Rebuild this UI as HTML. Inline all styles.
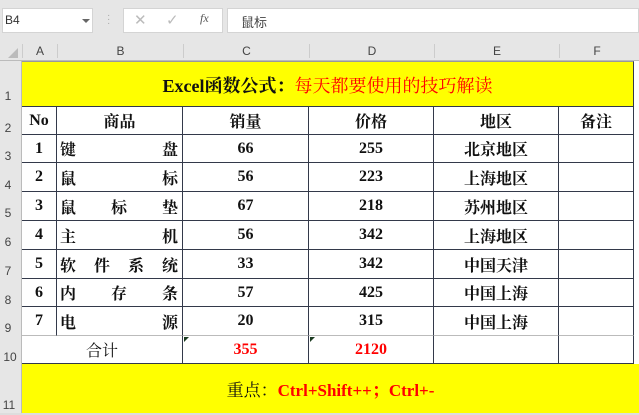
<!DOCTYPE html>
<html><head><meta charset="utf-8"><style>
*{margin:0;padding:0;box-sizing:border-box}
body{width:639px;height:415px;overflow:hidden;background:#e6e6e6;font-family:"Liberation Serif","Noto Serif CJK SC",serif;position:relative}
.a{position:absolute}
.hd{position:absolute;font-family:"Liberation Sans","Noto Sans CJK SC",sans-serif;font-size:12px;color:#444;text-align:center}
.c{position:absolute;border-right:1px solid #33394a;border-bottom:1px solid #33394a;display:flex;align-items:center;justify-content:center;font-size:16px;font-weight:bold;color:#111;background:#fff}
.y{background:#ff0}
.r{color:#f00}
.sp{justify-content:space-between;padding:0 4px 0 3px}
</style></head><body>
<div class="a" style="left:2px;top:8px;width:91px;height:25px;background:#fff;border:1px solid #d4d4d4"></div>
<div class="a" style="left:5px;top:13px;font-family:'Liberation Sans',sans-serif;font-size:12px;color:#333">B4</div>
<div class="a" style="left:82px;top:19px;width:0;height:0;border-left:4px solid transparent;border-right:4px solid transparent;border-top:4px solid #666"></div>
<div class="a" style="left:107px;top:14px;color:#aaa;font-size:10px;font-family:'Liberation Sans',sans-serif;line-height:4px">·<br>·<br>·</div>
<div class="a" style="left:123px;top:8px;width:100px;height:25px;background:#fff;border:1px solid #d4d4d4"></div>
<div class="a" style="left:134px;top:11px;color:#bbb;font-size:15px;font-family:'Liberation Sans',sans-serif">✕</div>
<div class="a" style="left:166px;top:11px;color:#bbb;font-size:15px;font-family:'DejaVu Sans',sans-serif">✓</div>
<div class="a" style="left:200px;top:11px;color:#555;font-size:12px;font-style:italic">fx</div>
<div class="a" style="left:227px;top:8px;width:412px;height:25px;background:#fff;border:1px solid #d4d4d4"></div>
<div class="a" style="left:241px;top:12px;font-family:'Noto Sans CJK SC',sans-serif;font-size:13px;color:#444">鼠标</div>
<div class="a" style="left:0;top:43px;width:639px;height:18px;background:#e6e6e6;border-bottom:1px solid #bbb"></div>
<div class="a" style="left:8px;top:48px;width:0;height:0;border-left:10px solid transparent;border-bottom:10px solid #bbb"></div>
<div class="hd" style="left:22px;top:44px;width:35px;border-left:1px solid #ccc">A</div>
<div class="hd" style="left:57px;top:44px;width:126px;border-left:1px solid #ccc">B</div>
<div class="hd" style="left:183px;top:44px;width:126px;border-left:1px solid #ccc">C</div>
<div class="hd" style="left:309px;top:44px;width:125px;border-left:1px solid #ccc">D</div>
<div class="hd" style="left:434px;top:44px;width:125px;border-left:1px solid #ccc">E</div>
<div class="hd" style="left:559px;top:44px;width:75px;border-left:1px solid #ccc">F</div>
<div class="a" style="left:0;top:61px;width:22px;height:354px;background:#e6e6e6;border-right:1px solid #bbb"></div>
<div class="hd" style="left:0;top:89px;width:16px">1</div>
<div class="hd" style="left:0;top:121px;width:16px">2</div>
<div class="hd" style="left:0;top:149px;width:16px">3</div>
<div class="hd" style="left:0;top:178px;width:16px">4</div>
<div class="hd" style="left:0;top:206px;width:16px">5</div>
<div class="hd" style="left:0;top:235px;width:16px">6</div>
<div class="hd" style="left:0;top:264px;width:16px">7</div>
<div class="hd" style="left:0;top:293px;width:16px">8</div>
<div class="hd" style="left:0;top:321px;width:16px">9</div>
<div class="hd" style="left:0;top:350px;width:20px">10</div>
<div class="hd" style="left:0;top:398px;width:18px">11</div>
<div class="c y" style="left:22px;top:61px;width:612px;height:46px;border-top:1px solid #999;font-size:18px;padding-top:2px"><span>Excel函数公式：</span><span class="r" style="font-weight:normal">每天都要使用的技巧解读</span></div>
<div class="a" style="left:634px;top:61px;width:5px;height:354px;background:#fff"></div>
<div class="c" style="left:22px;top:107px;width:35px;height:28px">No</div>
<div class="c" style="left:57px;top:107px;width:126px;height:28px">商品</div>
<div class="c" style="left:183px;top:107px;width:126px;height:28px">销量</div>
<div class="c" style="left:309px;top:107px;width:125px;height:28px">价格</div>
<div class="c" style="left:434px;top:107px;width:125px;height:28px">地区</div>
<div class="c" style="left:559px;top:107px;width:75px;height:28px">备注</div>

<div class="c" style="left:22px;top:135px;width:35px;height:28px">1</div>
<div class="c sp" style="left:57px;top:135px;width:126px;height:28px"><span>键</span><span>盘</span></div>
<div class="c" style="left:183px;top:135px;width:126px;height:28px">66</div>
<div class="c" style="left:309px;top:135px;width:125px;height:28px">255</div>
<div class="c" style="left:434px;top:135px;width:125px;height:28px">北京地区</div>
<div class="c" style="left:559px;top:135px;width:75px;height:28px"></div>

<div class="c" style="left:22px;top:163px;width:35px;height:29px">2</div>
<div class="c sp" style="left:57px;top:163px;width:126px;height:29px"><span>鼠</span><span>标</span></div>
<div class="c" style="left:183px;top:163px;width:126px;height:29px">56</div>
<div class="c" style="left:309px;top:163px;width:125px;height:29px">223</div>
<div class="c" style="left:434px;top:163px;width:125px;height:29px">上海地区</div>
<div class="c" style="left:559px;top:163px;width:75px;height:29px"></div>

<div class="c" style="left:22px;top:192px;width:35px;height:29px">3</div>
<div class="c sp" style="left:57px;top:192px;width:126px;height:29px"><span>鼠</span><span>标</span><span>垫</span></div>
<div class="c" style="left:183px;top:192px;width:126px;height:29px">67</div>
<div class="c" style="left:309px;top:192px;width:125px;height:29px">218</div>
<div class="c" style="left:434px;top:192px;width:125px;height:29px">苏州地区</div>
<div class="c" style="left:559px;top:192px;width:75px;height:29px"></div>

<div class="c" style="left:22px;top:221px;width:35px;height:29px">4</div>
<div class="c sp" style="left:57px;top:221px;width:126px;height:29px"><span>主</span><span>机</span></div>
<div class="c" style="left:183px;top:221px;width:126px;height:29px">56</div>
<div class="c" style="left:309px;top:221px;width:125px;height:29px">342</div>
<div class="c" style="left:434px;top:221px;width:125px;height:29px">上海地区</div>
<div class="c" style="left:559px;top:221px;width:75px;height:29px"></div>

<div class="c" style="left:22px;top:250px;width:35px;height:29px">5</div>
<div class="c sp" style="left:57px;top:250px;width:126px;height:29px"><span>软</span><span>件</span><span>系</span><span>统</span></div>
<div class="c" style="left:183px;top:250px;width:126px;height:29px">33</div>
<div class="c" style="left:309px;top:250px;width:125px;height:29px">342</div>
<div class="c" style="left:434px;top:250px;width:125px;height:29px">中国天津</div>
<div class="c" style="left:559px;top:250px;width:75px;height:29px"></div>

<div class="c" style="left:22px;top:279px;width:35px;height:28px">6</div>
<div class="c sp" style="left:57px;top:279px;width:126px;height:28px"><span>内</span><span>存</span><span>条</span></div>
<div class="c" style="left:183px;top:279px;width:126px;height:28px">57</div>
<div class="c" style="left:309px;top:279px;width:125px;height:28px">425</div>
<div class="c" style="left:434px;top:279px;width:125px;height:28px">中国上海</div>
<div class="c" style="left:559px;top:279px;width:75px;height:28px"></div>

<div class="c" style="left:22px;top:307px;width:35px;height:29px;border-bottom-color:#bbb">7</div>
<div class="c sp" style="left:57px;top:307px;width:126px;height:29px;border-bottom-color:#bbb"><span>电</span><span>源</span></div>
<div class="c" style="left:183px;top:307px;width:126px;height:29px;border-bottom-color:#bbb">20</div>
<div class="c" style="left:309px;top:307px;width:125px;height:29px;border-bottom-color:#bbb">315</div>
<div class="c" style="left:434px;top:307px;width:125px;height:29px;border-bottom-color:#bbb">中国上海</div>
<div class="c" style="left:559px;top:307px;width:75px;height:29px;border-bottom-color:#bbb"></div>

<div class="c" style="left:22px;top:336px;width:161px;height:28px;font-weight:normal">合计</div>
<div class="c r" style="left:183px;top:336px;width:126px;height:28px">355</div>
<div class="c r" style="left:309px;top:336px;width:125px;height:28px">2120</div>
<div class="c" style="left:434px;top:336px;width:125px;height:28px"></div>
<div class="c" style="left:559px;top:336px;width:75px;height:28px"></div>
<div class="a" style="left:184px;top:337px;width:0;height:0;border-top:5px solid #1a3a20;border-right:5px solid transparent"></div>
<div class="a" style="left:310px;top:337px;width:0;height:0;border-top:5px solid #1a3a20;border-right:5px solid transparent"></div>

<div class="c y" style="left:22px;top:364px;width:617px;height:49px;border:none;font-size:17px"><span style="font-weight:normal">重点：</span><span class="r">Ctrl+Shift++；Ctrl+-</span></div>
<div class="a" style="left:0;top:413px;width:639px;height:2px;background:#ddd"></div>
</body></html>
